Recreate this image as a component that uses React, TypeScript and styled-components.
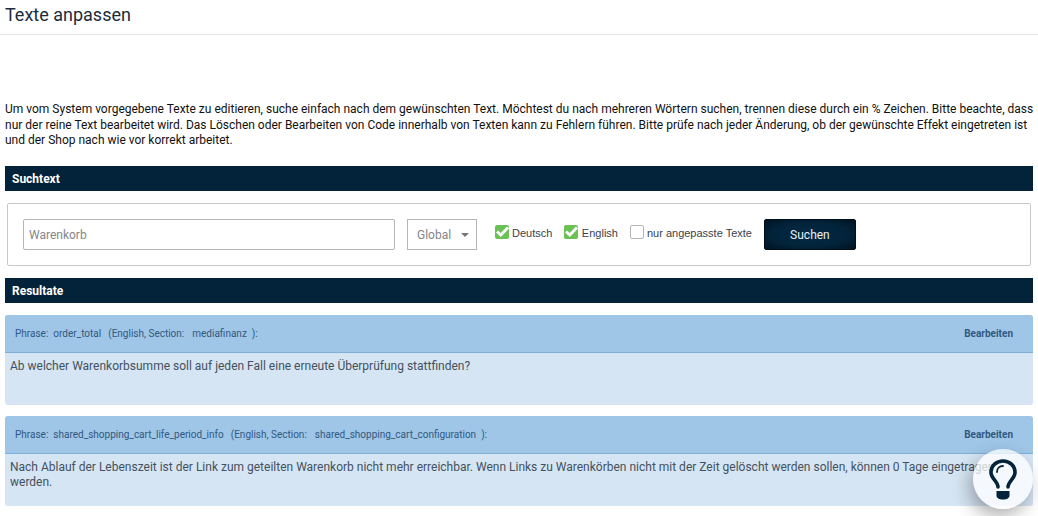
import styled, { createGlobalStyle } from "styled-components";

const GlobalStyle = createGlobalStyle`
  html, body {
    margin: 0;
    padding: 0;
    background: #fff;
    overflow: hidden;
  }
  body {
    font-family: Roboto, "Liberation Sans", sans-serif;
    font-size: 12px;
    color: #1f2b36;
  }
`;

const results = [
  {
    phrase: "order_total",
    section: "mediafinanz",
    text: "Ab welcher Warenkorbsumme soll auf jeden Fall eine erneute Überprüfung stattfinden?",
  },
  {
    phrase: "shared_shopping_cart_life_period_info",
    section: "shared_shopping_cart_configuration",
    text: "Nach Ablauf der Lebenszeit ist der Link zum geteilten Warenkorb nicht mehr erreichbar. Wenn Links zu Warenkörben nicht mit der Zeit gelöscht werden sollen, können 0 Tage eingetragen werden.",
  },
];

function CheckIcon() {
  return (
    <svg width="13" height="11" viewBox="0 0 13 11">
      <path d="M1 5.4 L4.8 9 L12 1.4" fill="none" stroke="#fff" strokeWidth="2.8" />
    </svg>
  );
}

function BulbIcon() {
  return (
    <svg width="28" height="41" viewBox="0 0 28 41" fill="none">
      <path
        d="M9 28 C9 22.5 2 19.5 2 13.5 C2 6.5 7.5 2 14 2 C20.5 2 26 6.5 26 13.5 C26 19.5 19 22.5 19 28"
        stroke="#02233a"
        strokeWidth="3.6"
        strokeLinecap="round"
      />
      <path d="M14 7 C10.5 7 8 9.6 8 13" stroke="#02233a" strokeWidth="1.8" strokeLinecap="round" />
      <path d="M7.5 32 H20.5 V36.5 C20.5 39 18 40.5 14 40.5 C10 40.5 7.5 39 7.5 36.5 Z" fill="#02233a" />
    </svg>
  );
}

function Panel({ phrase, section, text }: any) {
  return (
    <PanelBox>
      <PanelHead>
        <PhraseLine>
          <span>Phrase:</span>
          <span>{phrase}</span>
          <Meta>(English, Section:</Meta>
          <SectionName>{section}</SectionName>
          <span>):</span>
        </PhraseLine>
        <EditLink>Bearbeiten</EditLink>
      </PanelHead>
      <PanelBody>{text}</PanelBody>
    </PanelBox>
  );
}

export default function App() {
  return (
    <>
      <GlobalStyle />
      <TopBar>
        <Title>Texte anpassen</Title>
      </TopBar>
      <Content>
        <Intro>
          Um vom System vorgegebene Texte zu editieren, suche einfach nach dem gewünschten Text. Möchtest du nach mehreren Wörtern suchen, trennen diese durch ein % Zeichen. Bitte beachte, dass nur der reine Text bearbeitet wird. Das Löschen oder Bearbeiten von Code innerhalb von Texten kann zu Fehlern führen. Bitte prüfe nach jeder Änderung, ob der gewünschte Effekt eingetreten ist und der Shop nach wie vor korrekt arbeitet.
        </Intro>
        <SectionBar>Suchtext</SectionBar>
        <SearchBox>
          <SearchInput placeholder="Warenkorb" />
          <SelectBox>
            <span>Global</span>
            <Caret />
          </SelectBox>
          <CheckLabel>
            <CheckBox $checked>
              <CheckIcon />
            </CheckBox>
            <LabelText>Deutsch</LabelText>
          </CheckLabel>
          <CheckLabel $gap={3.5} $after={12.5}>
            <CheckBox $checked>
              <CheckIcon />
            </CheckBox>
            <LabelText>English</LabelText>
          </CheckLabel>
          <CheckLabel $gap={2.5} $after={12.5}>
            <CheckBox />
            <LabelText>nur angepasste Texte</LabelText>
          </CheckLabel>
          <SearchButton>Suchen</SearchButton>
        </SearchBox>
        <SectionBar>Resultate</SectionBar>
        <ResultList>
          {results.map((r) => (
            <Panel key={r.phrase} {...r} />
          ))}
        </ResultList>
      </Content>
      <HelpBubble>
        <BulbIcon />
      </HelpBubble>
    </>
  );
}

const TopBar = styled.header`
  height: 34px;
  border-bottom: 1px solid #e4e4e4;
  padding-left: 5px;
`;
const Title = styled.h1`
  margin: 0;
  font-size: 18px;
  font-weight: 400;
  line-height: 30px;
  color: #1b2c3c;
`;
const Content = styled.main`
  padding: 67px 5px 0;
`;
const Intro = styled.p`
  margin: 0 -4px 17px 0;
  font-size: 12px;
  line-height: 15.6px;
  color: #111;
`;
const SectionBar = styled.div`
  height: 25px;
  line-height: 27px;
  padding-left: 7px;
  background: #02233a;
  color: #fff;
  font-size: 12px;
  font-weight: 700;
`;
const SearchBox = styled.div`
  margin: 12px 2px;
  height: 63px;
  box-sizing: border-box;
  border: 1px solid #c8c8c8;
  border-radius: 2px;
  padding: 15px 0 0 15px;
  display: flex;
  align-items: flex-start;
`;
const SearchInput = styled.input`
  width: 372px;
  height: 31px;
  box-sizing: border-box;
  border: 1px solid #b5b5b5;
  border-radius: 2px;
  padding: 2px 5px 0;
  margin-right: 12px;
  font-family: Roboto, sans-serif;
  font-size: 12px;
  outline: none;
  &::placeholder {
    color: #85858a;
    opacity: 1;
  }
`;
const SelectBox = styled.div`
  width: 70px;
  height: 31px;
  box-sizing: border-box;
  border: 1px solid #b5b5b5;
  padding: 2px 7px 0 9px;
  display: flex;
  align-items: center;
  justify-content: space-between;
  margin-right: 18px;
  color: #85858a;
  font-size: 12px;
`;
const Caret = styled.span`
  width: 0;
  height: 0;
  border-left: 4px solid transparent;
  border-right: 4px solid transparent;
  border-top: 4px solid #777;
`;
const CheckLabel = styled.label<{ $gap?: number; $after?: number }>`
  display: flex;
  align-items: center;
  gap: ${(p) => p.$gap ?? 3}px;
  height: 14px;
  margin-top: 6px;
  margin-right: ${(p) => p.$after ?? 12}px;
  font-family: "Liberation Sans", Arial, sans-serif;
  font-size: 11px;
  color: #3a3f4a;
`;
const LabelText = styled.span`
  padding-top: 2px;
`;
const CheckBox = styled.span<{ $checked?: boolean }>`
  width: 14px;
  height: 14px;
  box-sizing: border-box;
  border-radius: 2px;
  display: flex;
  align-items: center;
  justify-content: center;
  background: ${(p) => (p.$checked ? "#6cc155" : "#fff")};
  border: ${(p) => (p.$checked ? "none" : "1px solid #b5b5b5")};
`;
const SearchButton = styled.button`
  width: 92px;
  height: 31px;
  padding: 2px 1px 0 0;
  border: 1px solid #02101c;
  border-radius: 2px;
  background: radial-gradient(ellipse at center, #042a44 0%, #02233a 60%, #01121f 100%);
  color: #e8f0f6;
  font-family: Roboto, sans-serif;
  font-size: 12px;
`;
const ResultList = styled.div`
  padding-top: 12px;
  display: flex;
  flex-direction: column;
  gap: 11px;
`;
const PanelBox = styled.section`
  height: 90px;
  border-radius: 3px;
  overflow: hidden;
  background: #d6e5f3;
`;
const PanelHead = styled.div`
  height: 36px;
  box-sizing: content-box;
  border-bottom: 1px solid #7fb0da;
  background: #9fc6e7;
  display: flex;
  align-items: center;
  justify-content: space-between;
  padding: 1px 20px 0 10px;
  font-size: 10px;
  color: #31587f;
`;
const PhraseLine = styled.div`
  display: flex;
  gap: 5px;
`;
const Meta = styled.span`
  margin-left: 2px;
`;
const SectionName = styled.span`
  margin-left: 3px;
`;
const EditLink = styled.span`
  font-weight: 700;
`;
const PanelBody = styled.div`
  padding: 6px 5px;
  font-size: 12px;
  line-height: 15.6px;
  color: #43515f;
`;
const HelpBubble = styled.div`
  position: fixed;
  left: 973px;
  top: 449px;
  width: 60px;
  height: 60px;
  border-radius: 50%;
  background: rgba(255, 255, 255, 0.74);
  box-shadow: -4px 8px 18px rgba(0, 0, 0, 0.3);
  display: flex;
  align-items: center;
  justify-content: center;
`;
